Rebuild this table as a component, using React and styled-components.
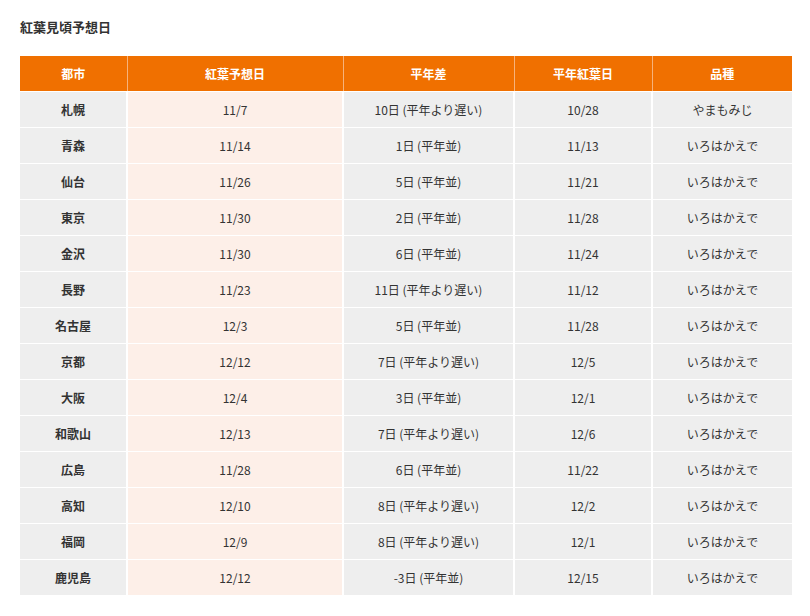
import React from 'react';
import styled, {createGlobalStyle} from 'styled-components';

const GlobalStyle = createGlobalStyle`
  body {
    margin: 0;
    background: #fff;
    font-family: "Noto Sans CJK JP", "Noto Sans", sans-serif;
    color: #333;
  }
`

const Page = styled.div`
  padding: 17px 18px 0 20px;
`

const Title = styled.h2`
  margin: 0 0 19px 0;
  font-size: 13px;
  font-weight: 700;
  line-height: 20px;
  color: #333;
`

const Table = styled.table`
  width: 772px;
  border-collapse: collapse;
  table-layout: fixed;
  font-size: 12px;
`

const HeadCell = styled.th`
  height: 35px;
  padding: 0;
  background: #f07000;
  color: #fff;
  font-weight: 700;
  text-align: center;
  border-left: 1px solid #f7b27a;
  &:first-child { border-left: none; }
`

const Row = styled.tr`
  border-top: 1px solid #fff;
`

const Cell = styled.td`
  height: 35px;
  padding: 0;
  text-align: center;
  background: ${props => (props.hot ? '#fdefe8' : '#eeeeee')};
  font-weight: ${props => (props.bold ? 700 : 400)};
  color: #333;
  border-left: 2px solid #fff;
  &:first-child { border-left: none; }
`

const cols = [107, 216, 171, 138, 140]

const rows = [
  ['札幌', '11/7', '10日 (平年より遅い)', '10/28', 'やまもみじ'],
  ['青森', '11/14', '1日 (平年並)', '11/13', 'いろはかえで'],
  ['仙台', '11/26', '5日 (平年並)', '11/21', 'いろはかえで'],
  ['東京', '11/30', '2日 (平年並)', '11/28', 'いろはかえで'],
  ['金沢', '11/30', '6日 (平年並)', '11/24', 'いろはかえで'],
  ['長野', '11/23', '11日 (平年より遅い)', '11/12', 'いろはかえで'],
  ['名古屋', '12/3', '5日 (平年並)', '11/28', 'いろはかえで'],
  ['京都', '12/12', '7日 (平年より遅い)', '12/5', 'いろはかえで'],
  ['大阪', '12/4', '3日 (平年並)', '12/1', 'いろはかえで'],
  ['和歌山', '12/13', '7日 (平年より遅い)', '12/6', 'いろはかえで'],
  ['広島', '11/28', '6日 (平年並)', '11/22', 'いろはかえで'],
  ['高知', '12/10', '8日 (平年より遅い)', '12/2', 'いろはかえで'],
  ['福岡', '12/9', '8日 (平年より遅い)', '12/1', 'いろはかえで'],
  ['鹿児島', '12/12', '-3日 (平年並)', '12/15', 'いろはかえで'],
]

const App = () => {
  return (
    <Page>
      <GlobalStyle />
      <Title>紅葉見頃予想日</Title>
      <Table>
        <colgroup>
          {cols.map((w, i) => <col key={i} style={{width: w}} />)}
        </colgroup>
        <thead>
          <tr>
            <HeadCell>都市</HeadCell>
            <HeadCell>紅葉予想日</HeadCell>
            <HeadCell>平年差</HeadCell>
            <HeadCell>平年紅葉日</HeadCell>
            <HeadCell>品種</HeadCell>
          </tr>
        </thead>
        <tbody>
          {rows.map((r) => (
            <Row key={r[0]}>
              <Cell bold>{r[0]}</Cell>
              <Cell hot>{r[1]}</Cell>
              <Cell>{r[2]}</Cell>
              <Cell>{r[3]}</Cell>
              <Cell>{r[4]}</Cell>
            </Row>
          ))}
        </tbody>
      </Table>
    </Page>
  )
}

export default App;
